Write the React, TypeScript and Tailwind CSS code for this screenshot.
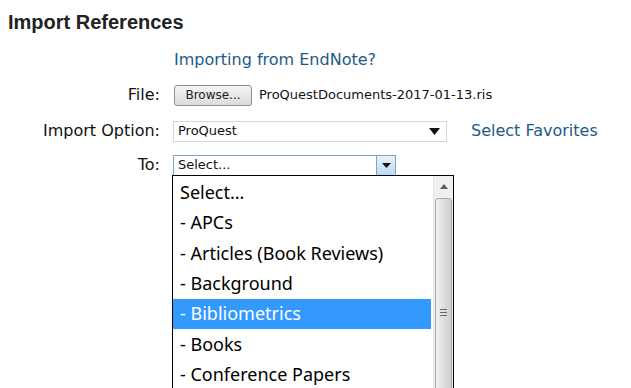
import React from "react";

const items = [
  "Select...",
  "- APCs",
  "- Articles (Book Reviews)",
  "- Background",
  "- Bibliometrics",
  "- Books",
  "- Conference Papers",
  "- Databases",
];

export default function App() {
  return (
    <div className="relative w-[631px] h-[388px] overflow-hidden bg-white">
      <h1 className="pl-[8px] pt-[9px] text-[20px] leading-[26px] font-bold text-[#222]" style={{ fontFamily: "'Liberation Sans', Arial, sans-serif" }}>
        Import References
      </h1>
      <div className="mt-[14px] pl-[174px] text-[16px] leading-[22px] text-[#1d5a86]" style={{ fontFamily: "'DejaVu Sans', Verdana, sans-serif" }}>
        Importing from EndNote?
      </div>
      <div className="mt-[13px] grid grid-cols-[160px_1fr] gap-x-[13px] items-center text-[#111]" style={{ fontFamily: "'DejaVu Sans', Verdana, sans-serif" }}>
        <div className="text-right text-[16px] leading-[22px]">File:</div>
        <div className="flex items-center">
          <div className="ml-[1px] w-[78px] h-[21px] flex items-center justify-center rounded-[3px] border border-[#8e8f8f] bg-gradient-to-b from-[#f4f4f4] to-[#dcdcdc] text-[12px] text-[#222]">
            Browse...
          </div>
          <span className="ml-[7px] text-[13px] text-[#111]">ProQuestDocuments-2017-01-13.ris</span>
        </div>

        <div className="mt-[14px] text-right text-[16px] leading-[22px]">Import Option:</div>
        <div className="mt-[14px] flex items-center">
          <div className="w-[274px] h-[21px] flex items-center justify-between border border-[#d7d7d7] bg-white pl-[4px] pr-[6px] text-[13px] text-[#111]">
            <span>ProQuest</span>
            <svg width="11" height="7" viewBox="0 0 11 7"><path d="M0 0h11L5.5 7z" fill="#111" /></svg>
          </div>
          <span className="ml-[24px] text-[16px] leading-[22px] text-[#1d5a86]">Select Favorites</span>
        </div>

        <div className="mt-[12px] text-right text-[16px] leading-[22px]">To:</div>
        <div className="mt-[12px] relative">
          <div className="w-[223px] h-[21px] flex items-stretch border border-[#7da2ce] bg-white text-[13px] text-[#111]">
            <span className="flex-1 pl-[4px] flex items-center">Select...</span>
            <span className="w-[19px] flex items-center justify-center border-l border-[#7da2ce] bg-gradient-to-b from-[#e8f3fc] to-[#b7dcf5]">
              <svg width="9" height="5" viewBox="0 0 9 5"><path d="M0 0h9L4.5 5z" fill="#111" /></svg>
            </span>
          </div>
          <div className="absolute left-[-1px] top-[20px] w-[282px] h-[240px] border border-black bg-white flex" style={{ fontFamily: "'Noto Sans', 'Open Sans', sans-serif" }}>
            <div className="flex-1 pt-[2px] pr-[2px]">
              {items.map((t, i) => (
                <div
                  key={t}
                  className={
                    i === 4
                      ? "h-[30.3px] pl-[7px] flex items-center text-[18px] bg-[#3399ff] text-white"
                      : "h-[30.3px] pl-[7px] flex items-center text-[18px] text-black"
                  }
                >
                  {t}
                </div>
              ))}
            </div>
            <div className="w-[20px] flex flex-col items-center bg-[#f0f0f0] border-l border-[#e6e6e6]">
              <div className="h-[21px] w-full flex items-center justify-center">
                <svg width="8" height="5" viewBox="0 0 8 5"><path d="M4 0L8 5H0z" fill="#606060" /></svg>
              </div>
              <div className="mt-[1px] w-[17px] flex-1 rounded-t-[3px] border border-[#a8a8a8] bg-gradient-to-r from-[#f2f2f2] via-[#dedede] to-[#cfcfcf] flex flex-col items-center">
                <div className="mt-[110px] flex flex-col gap-[2px]">
                  <div className="w-[7px] h-[1px] bg-[#6b6b6b]" />
                  <div className="w-[7px] h-[1px] bg-[#6b6b6b]" />
                  <div className="w-[7px] h-[1px] bg-[#6b6b6b]" />
                </div>
              </div>
            </div>
          </div>
        </div>
      </div>
    </div>
  );
}
